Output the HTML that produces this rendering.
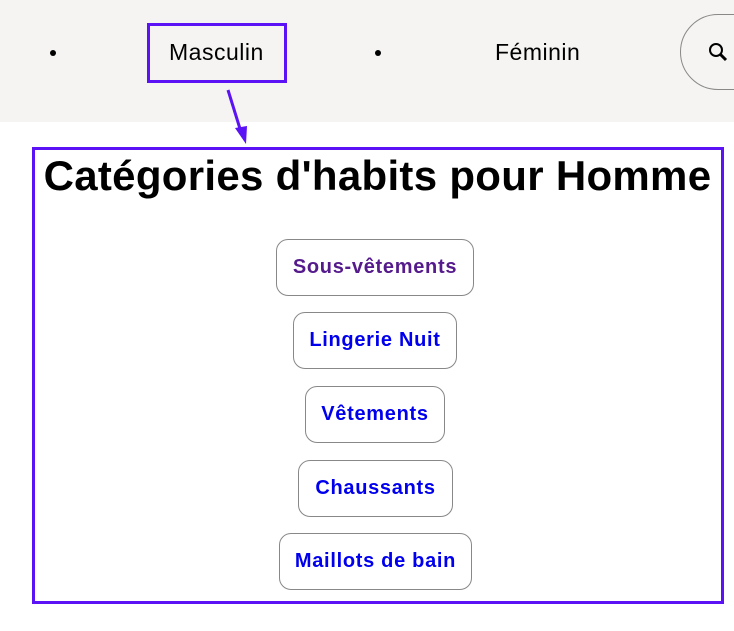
<!DOCTYPE html>
<html><head><meta charset="utf-8"><style>
body{margin:0;width:734px;height:631px;background:#fff;font-family:"Liberation Sans",sans-serif;position:relative;overflow:hidden}
.hdr{position:absolute;left:0;top:0;width:734px;height:122px;background:#f5f4f2}
.t{position:absolute;font-size:23px;letter-spacing:0.5px;color:#000}
.dot{position:absolute;width:6px;height:6px;border-radius:50%;background:#000}
.box{position:absolute;border:3px solid #5b12f5;box-sizing:border-box}
.srch{position:absolute;left:680px;top:14px;width:110px;height:76px;border:1px solid #888;border-radius:38px;box-sizing:border-box}
h1{position:absolute;left:32px;width:691px;top:152px;margin:0;text-align:center;font-size:42px;letter-spacing:0.3px;font-weight:bold;white-space:nowrap}
.b{position:absolute;height:57px;border:1px solid #888;border-radius:12px;box-sizing:border-box;font-weight:bold;font-size:20px;letter-spacing:0.7px;color:#0000ee;display:flex;align-items:center;justify-content:center}
</style></head><body>
<div class="hdr"></div>
<div class="dot" style="left:50px;top:50px"></div>
<div class="dot" style="left:375px;top:50px"></div>
<div class="t" style="left:169px;top:39px">Masculin</div>
<div class="t" style="left:495px;top:39px">Féminin</div>
<div class="box" style="left:147px;top:23px;width:140px;height:60px"></div>
<div class="srch"></div>
<svg style="position:absolute;left:706px;top:40px" width="28" height="28"><circle cx="10" cy="10" r="6" fill="none" stroke="#000" stroke-width="2"/><line x1="14" y1="14" x2="20" y2="20" stroke="#000" stroke-width="3"/></svg>
<svg style="position:absolute;left:0;top:0" width="734" height="160"><line x1="228" y1="90" x2="241" y2="132" stroke="#5b12f5" stroke-width="3"/><polygon points="235,128 247,126 246,144" fill="#5b12f5"/></svg>
<div class="box" style="left:32px;top:147px;width:692px;height:457px"></div>
<h1>Catégories d'habits pour Homme</h1>
<div class="b" style="left:276px;top:239px;width:198px;color:#551a8b">Sous-vêtements</div>
<div class="b" style="left:293px;top:312px;width:164px">Lingerie Nuit</div>
<div class="b" style="left:305px;top:386px;width:140px">Vêtements</div>
<div class="b" style="left:298px;top:460px;width:155px">Chaussants</div>
<div class="b" style="left:279px;top:533px;width:193px">Maillots de bain</div>
</body></html>
